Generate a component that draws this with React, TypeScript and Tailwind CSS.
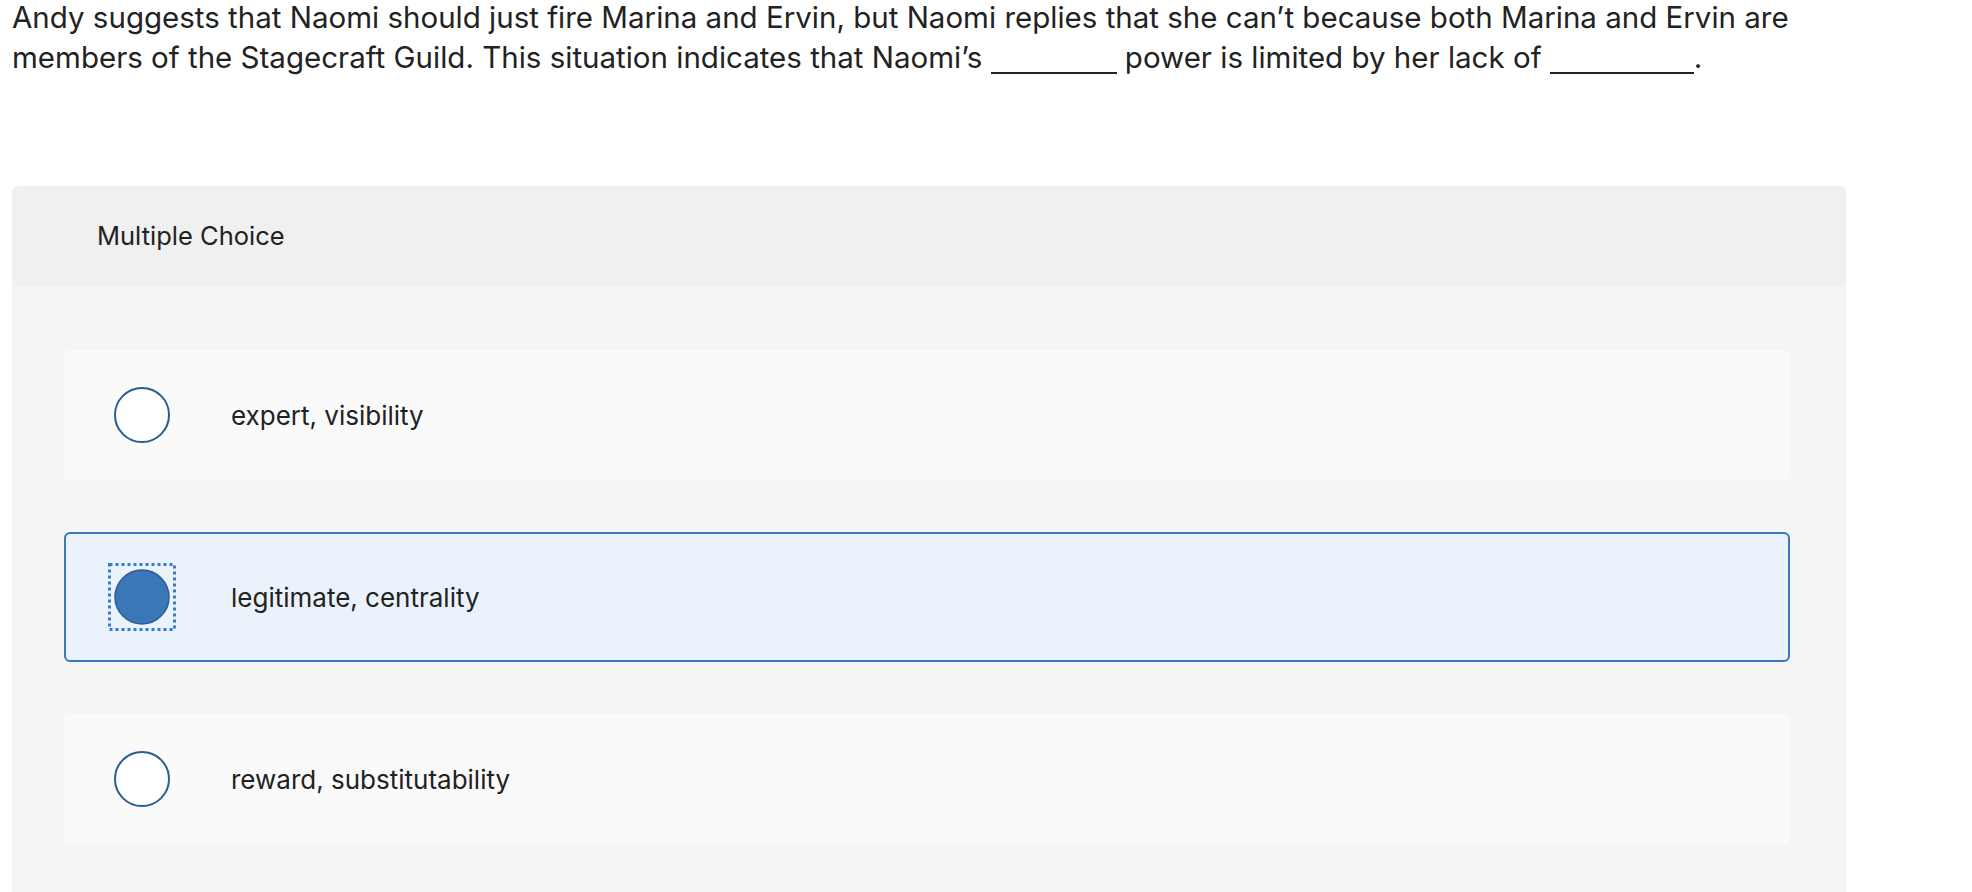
import { Fragment } from "react";

interface Choice {
	label: string;
	selected?: boolean;
}

const choices: Choice[] = [
	{ label: "expert, visibility" },
	{ label: "legitimate, centrality", selected: true },
	{ label: "reward, substitutability" },
];

function Blank({ width }: { width: string }) {
	return (
		<span
			className={`inline-block ${width} translate-y-[6px] border-b-2 border-[#222]`}
		/>
	);
}

function Radio({ selected }: { selected?: boolean }) {
	if (selected) {
		return (
			<svg width="68" height="68" viewBox="0 0 68 68" className="shrink-0">
				<rect
					x="1.5"
					y="1.5"
					width="65"
					height="65"
					fill="none"
					stroke="#3b7bc6"
					strokeWidth="3"
					strokeDasharray="3 3"
				/>
				<circle cx="34" cy="34" r="27" fill="#3b76b6" stroke="#2c5d93" strokeWidth="1.5" />
			</svg>
		);
	}
	return (
		<svg width="68" height="68" viewBox="0 0 68 68" className="shrink-0">
			<circle cx="34" cy="34" r="27" fill="#ffffff" stroke="#2a5d93" strokeWidth="2" />
		</svg>
	);
}

export default function App() {
	return (
		<div className="min-h-[892px] bg-white pl-[12px] pr-[126px] font-['Inter',sans-serif] text-[#222]">
			<p className="-mt-[3px] whitespace-nowrap text-[29.5px] leading-[40px]">
				Andy suggests that Naomi should just fire Marina and Ervin, but Naomi replies that
				she can’t because both Marina and Ervin are
				<br />
				members of the Stagecraft Guild. This situation indicates that Naomi’s{" "}
				<Blank width="w-[126px]" /> power is limited by her lack of{" "}
				<Blank width="w-[144px]" />.
			</p>

			<div className="mt-[109px] overflow-hidden rounded-t-[6px] bg-[#f5f5f5]">
				<div className="flex h-[100px] items-center bg-[#f0f0f0] pl-[85px] text-[25.5px]">
					Multiple Choice
				</div>
				<div className="flex flex-col gap-[52px] pb-[60px] pl-[52px] pr-[56px] pt-[64px]">
					{choices.map((c) => (
						<Fragment key={c.label}>
							<div
								className={`flex h-[130px] items-center rounded-[6px] border-2 pl-[42px] ${
									c.selected
										? "border-[#3a77bd] bg-[#eaf2fb]"
										: "border-transparent bg-[#fafafa]"
								}`}
							>
								<Radio selected={c.selected} />
								<span className="ml-[55px] text-[26px]">{c.label}</span>
							</div>
						</Fragment>
					))}
				</div>
			</div>
		</div>
	);
}
